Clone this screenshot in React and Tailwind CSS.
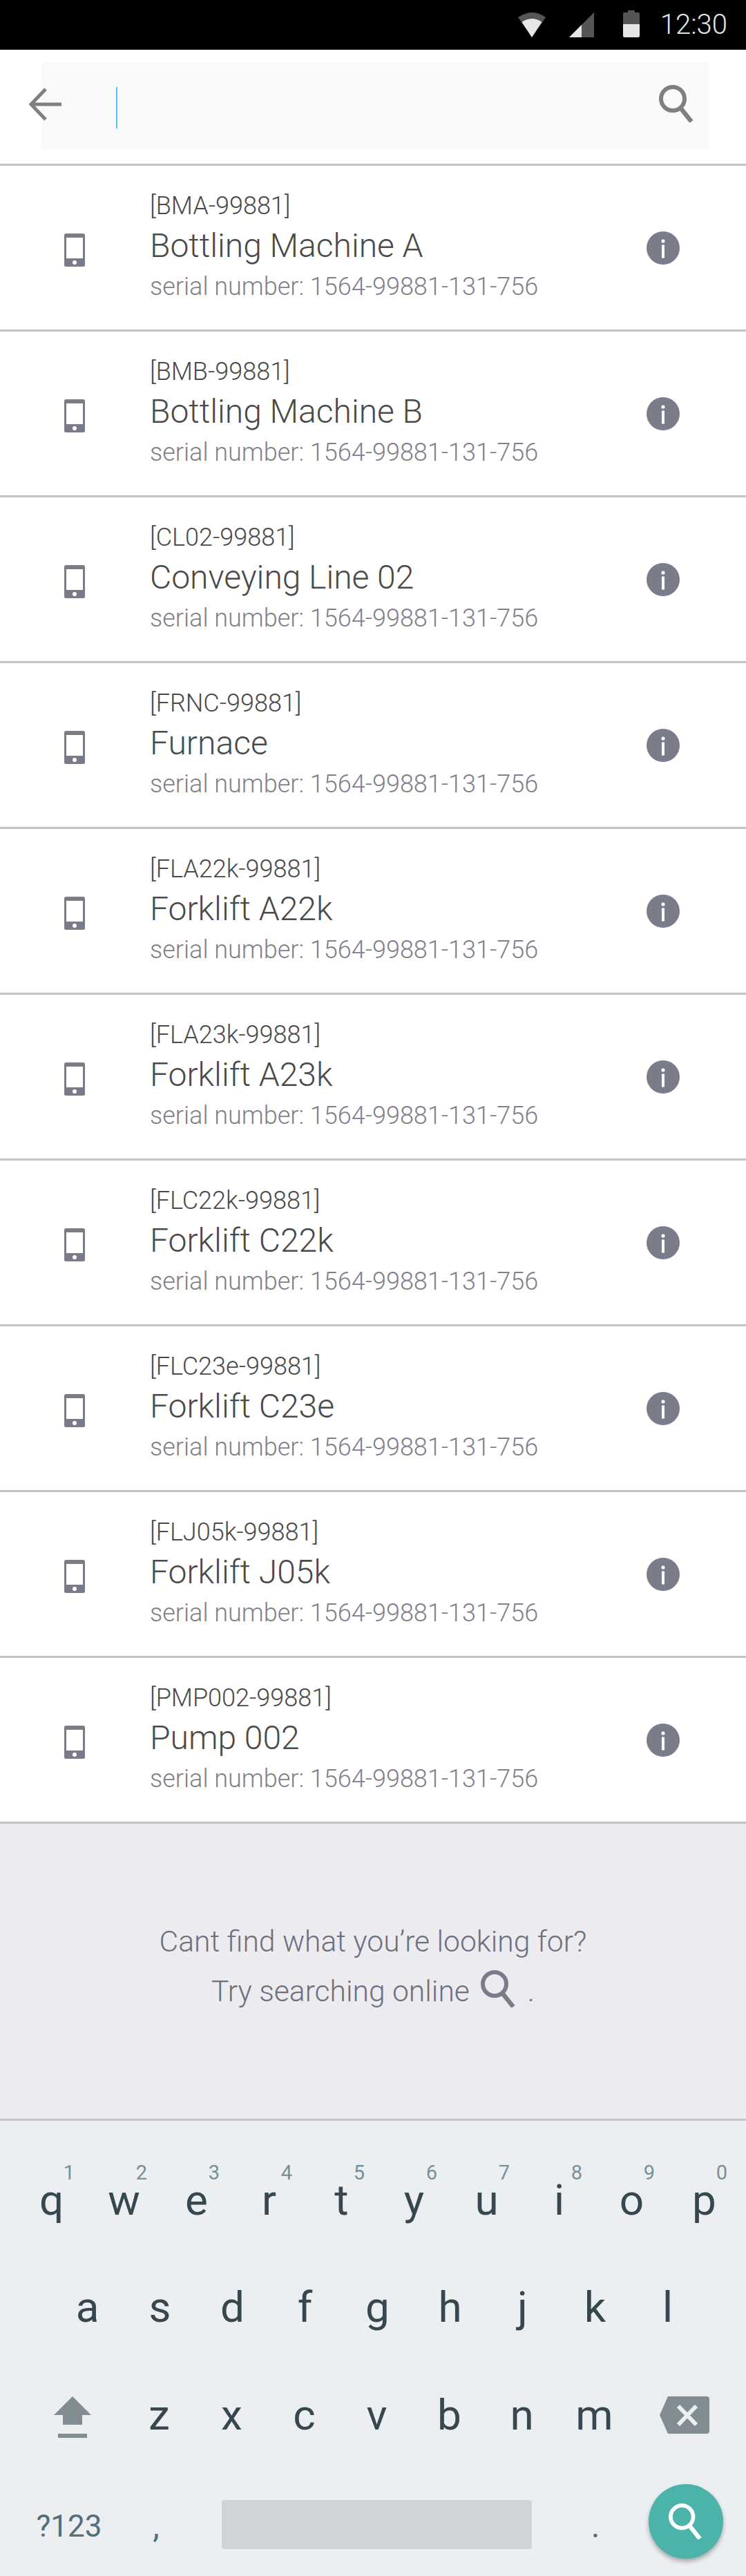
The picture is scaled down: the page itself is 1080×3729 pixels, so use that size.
import React from 'react';

const devices = [
  { tag: '[BMA-99881]', name: 'Bottling Machine A' },
  { tag: '[BMB-99881]', name: 'Bottling Machine B' },
  { tag: '[CL02-99881]', name: 'Conveying Line 02' },
  { tag: '[FRNC-99881]', name: 'Furnace' },
  { tag: '[FLA22k-99881]', name: 'Forklift A22k' },
  { tag: '[FLA23k-99881]', name: 'Forklift A23k' },
  { tag: '[FLC22k-99881]', name: 'Forklift C22k' },
  { tag: '[FLC23e-99881]', name: 'Forklift C23e' },
  { tag: '[FLJ05k-99881]', name: 'Forklift J05k' },
  { tag: '[PMP002-99881]', name: 'Pump 002' },
];

const topRow = ['q', 'w', 'e', 'r', 't', 'y', 'u', 'i', 'o', 'p'];
const digits = ['1', '2', '3', '4', '5', '6', '7', '8', '9', '0'];
const midRow = ['a', 's', 'd', 'f', 'g', 'h', 'j', 'k', 'l'];
const lowRow = ['z', 'x', 'c', 'v', 'b', 'n', 'm'];

function SearchGlyph({ className }) {
  return (
    <svg viewBox="0 0 52 54" className={className} fill="none" stroke="currentColor" strokeWidth="6">
      <ellipse cx="20" cy="20" rx="17" ry="17" />
      <path d="M31 33 L47 53" strokeWidth="6.5" />
    </svg>
  );
}

function StatusBar() {
  return (
    <div className="h-[72px] bg-black flex items-center justify-end pr-[27px]">
      <svg viewBox="0 0 40 36" className="w-[40px] h-[36px] mr-[34px] mt-[-1px]">
        <path d="M0 7 Q20 -7 40 7 L20 36 Z" fill="#555555" />
        <path d="M5.5 14 Q20 4 34.5 14 L20 36 Z" fill="#e6e6e6" />
      </svg>
      <svg viewBox="0 0 36 36" className="w-[36px] h-[36px] mr-[42px] mt-[-1px]">
        <path d="M36 0 V36 H0 Z" fill="#555555" />
        <path d="M18 18 V36 H0 Z" fill="#e6e6e6" />
      </svg>
      <svg viewBox="0 0 24 39" className="w-[24px] h-[39px] mr-[30px] mt-[-3px]">
        <path d="M7 0 H17 V3 H22 Q24 3 24 5 V20 H0 V5 Q0 3 2 3 H7 Z" fill="#555555" />
        <path d="M0 20 H24 V37 Q24 39 22 39 H2 Q0 39 0 37 Z" fill="#e6e6e6" />
      </svg>
      <span className="text-[40px] leading-none font-light text-[#e4e4e4]">12:30</span>
    </div>
  );
}

function SearchHeader() {
  return (
    <div className="h-[168px] bg-white border-b-[3px] border-[#c4c4c4] pt-[18px]">
      <div className="ml-[60px] w-[966px] h-[126px] bg-[#fafafa] flex items-center relative">
        <svg viewBox="0 0 48 48" className="w-[48px] h-[48px] ml-[-18px] mt-[-4px]" fill="none" stroke="#808080" strokeWidth="5">
          <path d="M47 24 H4" />
          <path d="M24 2 L3 24 L24 46" />
        </svg>
        <div className="w-[2px] h-[60px] bg-[#4fc3f7] ml-[78px] mt-[6px]" />
        <SearchGlyph className="w-[52px] h-[54px] ml-auto mr-[20px] mt-[-6px] text-[#7f7f7f]" />
      </div>
    </div>
  );
}

function DeviceRow({ tag, name }) {
  return (
    <div className="h-[240px] border-b-[3px] border-[#c4c4c4] bg-white flex items-center">
      <svg viewBox="0 0 30 48" className="w-[30px] h-[48px] ml-[93px] mt-[6px] shrink-0">
        <rect width="30" height="48" rx="2.5" fill="#7b7c8a" />
        <rect x="3" y="6" width="24" height="30" fill="#ffffff" />
        <circle cx="15" cy="42" r="3" fill="#ffffff" />
      </svg>
      <div className="ml-[94px] flex-1 mt-[-3px]">
        <div className="text-[36px] leading-[46px] font-light text-[#4a4a4a]">{tag}</div>
        <div className="text-[48px] leading-[70px] font-light text-[#4a4a4a]">{name}</div>
        <div className="text-[36px] leading-[48px] font-light text-[#7f808c]">serial number: 1564-99881-131-756</div>
      </div>
      <svg viewBox="0 0 48 48" className="w-[48px] h-[48px] mr-[96px] shrink-0">
        <circle cx="24" cy="24" r="24" fill="#7b7c8a" />
        <circle cx="24" cy="14" r="2.6" fill="#ffffff" />
        <rect x="22" y="19.5" width="4" height="19" fill="#ffffff" />
      </svg>
    </div>
  );
}

function OnlineHint() {
  return (
    <div className="h-[430px] bg-[#ebebf0] border-b-[3px] border-[#c4c4c7] flex flex-col items-center pt-[134px] text-[42.6px] leading-[72px] font-light text-[#6f707e]">
      <div>Cant find what you’re looking for?</div>
      <div className="flex items-center">
        <span>Try searching online</span>
        <SearchGlyph className="w-[52px] h-[54px] ml-[16px] mr-[16px] mt-[-6px] text-[#7b7c8a]" />
        <span>.</span>
      </div>
    </div>
  );
}

function Letter({ children }) {
  return (
    <div className="w-[105px] h-[155px] flex items-center justify-center text-[62px] leading-none text-[#37474f] relative">
      {children}
    </div>
  );
}

function Keyboard() {
  return (
    <div className="h-[659px] bg-[#eceff1] pt-[37px]">
      <div className="flex pl-[22px]">
        {topRow.map((k, i) => (
          <Letter key={k}>
            {k}
            <span className="absolute left-[78px] top-[24px] w-0 flex justify-center text-[29px] leading-none text-[#78909c]">{digits[i]}</span>
          </Letter>
        ))}
      </div>
      <div className="flex pl-[74px]">
        {midRow.map((k) => (
          <Letter key={k}>{k}</Letter>
        ))}
      </div>
      <div className="flex items-center pt-[2px] h-[155px]">
        <svg viewBox="0 0 54 60" className="w-[54px] h-[60px] ml-[78px] mr-[46px] mt-[6px]">
          <path d="M27 0 L54 27 H41 V41 H13 V27 H0 Z" fill="#828c93" />
          <rect x="6" y="54" width="42" height="6" fill="#828c93" />
        </svg>
        {lowRow.map((k) => (
          <Letter key={k}>{k}</Letter>
        ))}
        <svg viewBox="0 0 72 54" className="w-[72px] h-[54px] ml-[42px]">
          <path d="M12 0 H68 Q72 0 72 4 V50 Q72 54 68 54 H12 L0 27 Z" fill="#828c93" />
          <path d="M27 14 L53 41 M53 14 L27 41" stroke="#eceff1" strokeWidth="6" />
        </svg>
      </div>
      <div className="flex items-center h-[155px]">
        <span className="w-[200px] text-center text-[44px] text-[#546e7a] mt-[14px]">?123</span>
        <span className="w-[52px] text-center text-[48px] text-[#546e7a] mt-[14px]">,</span>
        <div className="w-[449px] h-[71px] ml-[69px] mt-[10px] bg-[#cfd4d7] rounded-[4px]" />
        <span className="w-[40px] ml-[72px] text-center text-[48px] text-[#546e7a] mt-[14px]">.</span>
        <div className="w-[108px] h-[108px] ml-[57px] rounded-full bg-[#4bb3a9] shadow-[0_4px_6px_rgba(0,0,0,0.3)] flex items-center justify-center">
          <SearchGlyph className="w-[50px] h-[52px] text-white" />
        </div>
      </div>
    </div>
  );
}

export default function App() {
  return (
    <div className="w-[1080px] h-[3729px] overflow-hidden bg-white font-['Roboto',sans-serif]">
      <StatusBar />
      <SearchHeader />
      {devices.map((d) => (
        <DeviceRow key={d.tag} tag={d.tag} name={d.name} />
      ))}
      <OnlineHint />
      <Keyboard />
    </div>
  );
}
